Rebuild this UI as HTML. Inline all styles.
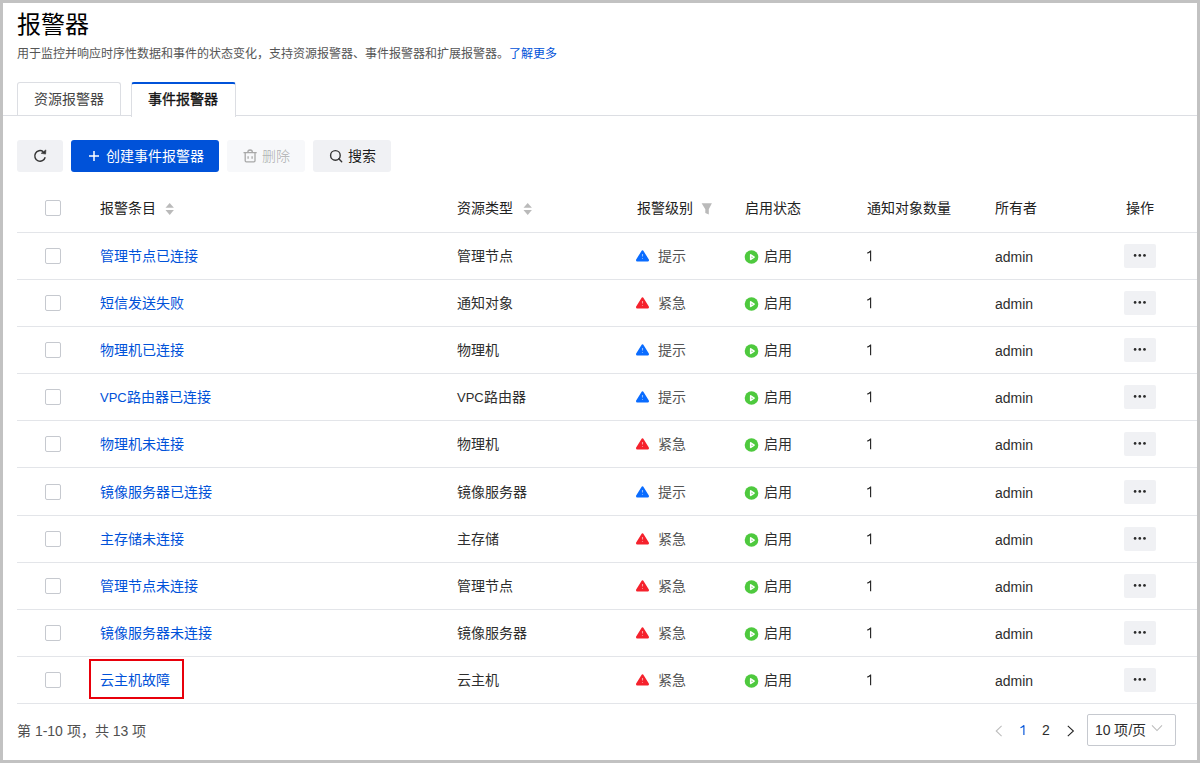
<!DOCTYPE html>
<html lang="zh-CN"><head><meta charset="utf-8">
<style>
*{box-sizing:border-box;margin:0;padding:0}
html,body{width:1200px;height:763px;overflow:hidden;background:#c2c2c2}
body{font-family:"Liberation Sans",sans-serif;color:rgba(0,0,0,.9);position:relative}
.page{position:absolute;left:3px;top:3px;width:1194px;height:757px;background:#fff;overflow:hidden}
.abs{position:absolute;white-space:nowrap}
.title{left:14px;top:6px;font-size:24px;line-height:32px;color:#000}
.desc{left:14px;top:41px;font-size:12px;line-height:20px;color:#555}
.desc a{color:#0052d9;text-decoration:none}
.tabline{left:0;top:112px;width:1194px;height:1px;background:#dcdee3}
.tab{top:79px;height:33px;border:1px solid #dcdee3;border-bottom:none;border-radius:3px 3px 0 0;font-size:14px;line-height:32px;text-align:center;background:#fff;color:#444}
.tab.t1{left:14px;width:104px;line-height:33px}
.tab.t2{left:128px;width:105px;border-top:2px solid #0052d9;line-height:31px;color:rgba(0,0,0,.9);font-weight:400;-webkit-text-stroke:0.4px rgba(0,0,0,.9);height:35px;text-indent:-2px}
.btn{top:137px;height:32px;border-radius:3px;font-size:14px;line-height:32px;background:#e7e7e7}
.b1{left:14px;width:46px;background:#f0f1f4}
.b2{left:68px;width:148px;background:#0052d9;color:#fff}
.b3{left:224px;width:78px;background:#f7f8fa;color:rgba(0,0,0,.26)}
.b4{left:310px;width:78px;background:#f0f1f4}
.btn svg{position:absolute}
.btn span{position:absolute}
.hline{left:14px;width:1180px;height:1px;background:#e3e5e9}
.cb{width:16px;height:16px;border:1px solid #c6c9cf;border-radius:2px;background:#fff}
.th{font-size:14px;line-height:22px;color:#222}
.td{font-size:14px;line-height:22px;color:#2e2e2e}
.lk{color:#0052d9}
.lv{color:#555}
.sm{font-size:13px}
.more{width:32px;height:24px;border-radius:2px;background:#f0f1f4}
.more i{position:absolute;top:10px;width:2.6px;height:2.6px;border-radius:50%;background:#333}
</style></head><body>
<div class="page">
<div class="abs title">报警器</div>
<div class="abs desc">用于监控并响应时序性数据和事件的状态变化，支持资源报警器、事件报警器和扩展报警器。<a>了解更多</a></div>
<div class="abs tabline"></div>
<div class="abs tab t1">资源报警器</div>
<div class="abs tab t2">事件报警器</div>

<div class="abs btn b1"><svg style="left:13px;top:5px" width="20" height="22" viewBox="0 0 20 22"><path d="M15.2 12.3A5.3 5.3 0 1 1 13.2 6.6" fill="none" stroke="#333" stroke-width="1.45"/><path d="M11.2 8.3L15.9 4.9L15.6 9.1Z" fill="#333" stroke="#333" stroke-width="0.6" stroke-linejoin="round"/></svg></div>
<div class="abs btn b2"><svg style="left:18px;top:11px" width="10" height="10" viewBox="0 0 10 10"><path d="M5 0v10M0 5h10" stroke="#fff" stroke-width="1.5"/></svg><span style="left:35px;top:0">创建事件报警器</span></div>
<div class="abs btn b3"><svg style="left:11px;top:5px" width="24" height="22" viewBox="0 0 24 22"><path d="M5.5 7.6H18.7M9.8 7.6A2.3 2.6 0 0 1 14.4 7.6M7.2 7.6V15.8Q7.2 16.9 8.3 16.9H15.9Q17 16.9 17 15.8V7.6M10.1 11.2V13.8M14.1 11.2V13.8" fill="none" stroke="#a8a8a8" stroke-width="1.3"/></svg><span style="left:35px;top:0">删除</span></div>
<div class="abs btn b4"><svg style="left:11px;top:5px" width="24" height="22" viewBox="0 0 24 22"><circle cx="11.4" cy="10.4" r="4.8" fill="none" stroke="#333" stroke-width="1.4"/><path d="M14.8 13.8L17.7 16.7" stroke="#333" stroke-width="1.4" stroke-linecap="round"/></svg><span style="left:35px;top:0">搜索</span></div>

<div class="abs cb" style="left:42px;top:197px;width:16px;height:16px;"></div>
<div class="abs th" style="left:97px;top:194px;">报警条目</div>
<svg class="abs" style="left:162px;top:199px" width="10" height="14" viewBox="0 0 10 14"><path d="M4.7 1L8.9 5.8H0.5z" fill="#bababa"/><path d="M4.7 13L8.9 7.9H0.5z" fill="#bababa"/></svg>
<div class="abs th" style="left:454px;top:194px;">资源类型</div>
<svg class="abs" style="left:520px;top:199px" width="10" height="14" viewBox="0 0 10 14"><path d="M4.7 1L8.9 5.8H0.5z" fill="#bababa"/><path d="M4.7 13L8.9 7.9H0.5z" fill="#bababa"/></svg>
<div class="abs th" style="left:634px;top:194px;">报警级别</div>
<svg class="abs" style="left:697px;top:199px" width="14" height="14" viewBox="0 0 14 14"><path d="M1.6 1.2H11.9L8.8 7.3V12.5L5.3 11V7.3Z" fill="#bababa"/></svg>
<div class="abs th" style="left:742px;top:194px;">启用状态</div>
<div class="abs th" style="left:864px;top:194px;">通知对象数量</div>
<div class="abs th" style="left:992px;top:194px;">所有者</div>
<div class="abs th" style="left:1123px;top:194px;">操作</div>
<div class="abs hline" style="left:14px;top:229px;width:1180px;height:1px;"></div>
<div class="abs cb" style="left:42px;top:245px;width:16px;height:16px;"></div>
<div class="abs td lk" style="left:97px;top:242px;">管理节点已连接</div>
<div class="abs td" style="left:454px;top:242px;">管理节点</div>
<svg class="abs" style="left:629px;top:243px" width="20" height="20" viewBox="0 0 20 20"><path d="M10.5 5.5L15.8 14.2H5.2z" fill="#0a6cff" stroke="#0a6cff" stroke-width="2.4" stroke-linejoin="round"/><path d="M10.5 7.9V10.4M10.5 12V12.8" stroke="#fff" stroke-opacity="0.55" stroke-width="1.1"/></svg>
<div class="abs td lv" style="left:655px;top:242px;">提示</div>
<svg class="abs" style="left:740px;top:245px" width="18" height="18" viewBox="0 0 18 18"><circle cx="8.5" cy="9" r="6.8" fill="#4ec93e"/><path d="M7.7 6.8L11.1 9.1L7.7 11.4z" fill="none" stroke="#fff" stroke-width="1.6" stroke-linejoin="round"/></svg>
<div class="abs td" style="left:761px;top:242px;">启用</div>
<svg class="abs" style="left:863px;top:247px" width="8" height="12" viewBox="0 0 8 12"><path d="M4.6 0.6V11.2M4.6 0.8Q3.5 2.3 1.3 3.1" fill="none" stroke="#262626" stroke-width="1.15"/></svg>
<div class="abs td" style="left:992px;top:243px;">admin</div>
<div class="abs more" style="left:1121px;top:241px"><svg width="32" height="24" viewBox="0 0 32 24" style="position:absolute;left:0;top:0"><circle cx="11.1" cy="11.4" r="1.35" fill="#2a2a2a"/><circle cx="15.8" cy="11.4" r="1.35" fill="#2a2a2a"/><circle cx="20.5" cy="11.4" r="1.35" fill="#2a2a2a"/></svg></div>
<div class="abs hline" style="left:14px;top:276px;width:1180px;height:1px;"></div>
<div class="abs cb" style="left:42px;top:292px;width:16px;height:16px;"></div>
<div class="abs td lk" style="left:97px;top:289px;">短信发送失败</div>
<div class="abs td" style="left:454px;top:289px;">通知对象</div>
<svg class="abs" style="left:629px;top:290px" width="20" height="20" viewBox="0 0 20 20"><path d="M10.5 5.5L15.8 14.2H5.2z" fill="#f5222d" stroke="#f5222d" stroke-width="2.4" stroke-linejoin="round"/><path d="M10.5 7.9V10.4M10.5 12V12.8" stroke="#fff" stroke-opacity="0.55" stroke-width="1.1"/></svg>
<div class="abs td lv" style="left:655px;top:289px;">紧急</div>
<svg class="abs" style="left:740px;top:292px" width="18" height="18" viewBox="0 0 18 18"><circle cx="8.5" cy="9" r="6.8" fill="#4ec93e"/><path d="M7.7 6.8L11.1 9.1L7.7 11.4z" fill="none" stroke="#fff" stroke-width="1.6" stroke-linejoin="round"/></svg>
<div class="abs td" style="left:761px;top:289px;">启用</div>
<svg class="abs" style="left:863px;top:294px" width="8" height="12" viewBox="0 0 8 12"><path d="M4.6 0.6V11.2M4.6 0.8Q3.5 2.3 1.3 3.1" fill="none" stroke="#262626" stroke-width="1.15"/></svg>
<div class="abs td" style="left:992px;top:290px;">admin</div>
<div class="abs more" style="left:1121px;top:288px"><svg width="32" height="24" viewBox="0 0 32 24" style="position:absolute;left:0;top:0"><circle cx="11.1" cy="11.4" r="1.35" fill="#2a2a2a"/><circle cx="15.8" cy="11.4" r="1.35" fill="#2a2a2a"/><circle cx="20.5" cy="11.4" r="1.35" fill="#2a2a2a"/></svg></div>
<div class="abs hline" style="left:14px;top:323px;width:1180px;height:1px;"></div>
<div class="abs cb" style="left:42px;top:339px;width:16px;height:16px;"></div>
<div class="abs td lk" style="left:97px;top:336px;">物理机已连接</div>
<div class="abs td" style="left:454px;top:336px;">物理机</div>
<svg class="abs" style="left:629px;top:337px" width="20" height="20" viewBox="0 0 20 20"><path d="M10.5 5.5L15.8 14.2H5.2z" fill="#0a6cff" stroke="#0a6cff" stroke-width="2.4" stroke-linejoin="round"/><path d="M10.5 7.9V10.4M10.5 12V12.8" stroke="#fff" stroke-opacity="0.55" stroke-width="1.1"/></svg>
<div class="abs td lv" style="left:655px;top:336px;">提示</div>
<svg class="abs" style="left:740px;top:339px" width="18" height="18" viewBox="0 0 18 18"><circle cx="8.5" cy="9" r="6.8" fill="#4ec93e"/><path d="M7.7 6.8L11.1 9.1L7.7 11.4z" fill="none" stroke="#fff" stroke-width="1.6" stroke-linejoin="round"/></svg>
<div class="abs td" style="left:761px;top:336px;">启用</div>
<svg class="abs" style="left:863px;top:341px" width="8" height="12" viewBox="0 0 8 12"><path d="M4.6 0.6V11.2M4.6 0.8Q3.5 2.3 1.3 3.1" fill="none" stroke="#262626" stroke-width="1.15"/></svg>
<div class="abs td" style="left:992px;top:337px;">admin</div>
<div class="abs more" style="left:1121px;top:335px"><svg width="32" height="24" viewBox="0 0 32 24" style="position:absolute;left:0;top:0"><circle cx="11.1" cy="11.4" r="1.35" fill="#2a2a2a"/><circle cx="15.8" cy="11.4" r="1.35" fill="#2a2a2a"/><circle cx="20.5" cy="11.4" r="1.35" fill="#2a2a2a"/></svg></div>
<div class="abs hline" style="left:14px;top:370px;width:1180px;height:1px;"></div>
<div class="abs cb" style="left:42px;top:386px;width:16px;height:16px;"></div>
<div class="abs td lk" style="left:97px;top:383px;"><span class="sm">VPC</span>路由器已连接</div>
<div class="abs td" style="left:454px;top:383px;"><span class="sm">VPC</span>路由器</div>
<svg class="abs" style="left:629px;top:384px" width="20" height="20" viewBox="0 0 20 20"><path d="M10.5 5.5L15.8 14.2H5.2z" fill="#0a6cff" stroke="#0a6cff" stroke-width="2.4" stroke-linejoin="round"/><path d="M10.5 7.9V10.4M10.5 12V12.8" stroke="#fff" stroke-opacity="0.55" stroke-width="1.1"/></svg>
<div class="abs td lv" style="left:655px;top:383px;">提示</div>
<svg class="abs" style="left:740px;top:386px" width="18" height="18" viewBox="0 0 18 18"><circle cx="8.5" cy="9" r="6.8" fill="#4ec93e"/><path d="M7.7 6.8L11.1 9.1L7.7 11.4z" fill="none" stroke="#fff" stroke-width="1.6" stroke-linejoin="round"/></svg>
<div class="abs td" style="left:761px;top:383px;">启用</div>
<svg class="abs" style="left:863px;top:388px" width="8" height="12" viewBox="0 0 8 12"><path d="M4.6 0.6V11.2M4.6 0.8Q3.5 2.3 1.3 3.1" fill="none" stroke="#262626" stroke-width="1.15"/></svg>
<div class="abs td" style="left:992px;top:384px;">admin</div>
<div class="abs more" style="left:1121px;top:382px"><svg width="32" height="24" viewBox="0 0 32 24" style="position:absolute;left:0;top:0"><circle cx="11.1" cy="11.4" r="1.35" fill="#2a2a2a"/><circle cx="15.8" cy="11.4" r="1.35" fill="#2a2a2a"/><circle cx="20.5" cy="11.4" r="1.35" fill="#2a2a2a"/></svg></div>
<div class="abs hline" style="left:14px;top:417px;width:1180px;height:1px;"></div>
<div class="abs cb" style="left:42px;top:433px;width:16px;height:16px;"></div>
<div class="abs td lk" style="left:97px;top:430px;">物理机未连接</div>
<div class="abs td" style="left:454px;top:430px;">物理机</div>
<svg class="abs" style="left:629px;top:431px" width="20" height="20" viewBox="0 0 20 20"><path d="M10.5 5.5L15.8 14.2H5.2z" fill="#f5222d" stroke="#f5222d" stroke-width="2.4" stroke-linejoin="round"/><path d="M10.5 7.9V10.4M10.5 12V12.8" stroke="#fff" stroke-opacity="0.55" stroke-width="1.1"/></svg>
<div class="abs td lv" style="left:655px;top:430px;">紧急</div>
<svg class="abs" style="left:740px;top:433px" width="18" height="18" viewBox="0 0 18 18"><circle cx="8.5" cy="9" r="6.8" fill="#4ec93e"/><path d="M7.7 6.8L11.1 9.1L7.7 11.4z" fill="none" stroke="#fff" stroke-width="1.6" stroke-linejoin="round"/></svg>
<div class="abs td" style="left:761px;top:430px;">启用</div>
<svg class="abs" style="left:863px;top:435px" width="8" height="12" viewBox="0 0 8 12"><path d="M4.6 0.6V11.2M4.6 0.8Q3.5 2.3 1.3 3.1" fill="none" stroke="#262626" stroke-width="1.15"/></svg>
<div class="abs td" style="left:992px;top:431px;">admin</div>
<div class="abs more" style="left:1121px;top:429px"><svg width="32" height="24" viewBox="0 0 32 24" style="position:absolute;left:0;top:0"><circle cx="11.1" cy="11.4" r="1.35" fill="#2a2a2a"/><circle cx="15.8" cy="11.4" r="1.35" fill="#2a2a2a"/><circle cx="20.5" cy="11.4" r="1.35" fill="#2a2a2a"/></svg></div>
<div class="abs hline" style="left:14px;top:464px;width:1180px;height:1px;"></div>
<div class="abs cb" style="left:42px;top:481px;width:16px;height:16px;"></div>
<div class="abs td lk" style="left:97px;top:478px;">镜像服务器已连接</div>
<div class="abs td" style="left:454px;top:478px;">镜像服务器</div>
<svg class="abs" style="left:629px;top:479px" width="20" height="20" viewBox="0 0 20 20"><path d="M10.5 5.5L15.8 14.2H5.2z" fill="#0a6cff" stroke="#0a6cff" stroke-width="2.4" stroke-linejoin="round"/><path d="M10.5 7.9V10.4M10.5 12V12.8" stroke="#fff" stroke-opacity="0.55" stroke-width="1.1"/></svg>
<div class="abs td lv" style="left:655px;top:478px;">提示</div>
<svg class="abs" style="left:740px;top:481px" width="18" height="18" viewBox="0 0 18 18"><circle cx="8.5" cy="9" r="6.8" fill="#4ec93e"/><path d="M7.7 6.8L11.1 9.1L7.7 11.4z" fill="none" stroke="#fff" stroke-width="1.6" stroke-linejoin="round"/></svg>
<div class="abs td" style="left:761px;top:478px;">启用</div>
<svg class="abs" style="left:863px;top:483px" width="8" height="12" viewBox="0 0 8 12"><path d="M4.6 0.6V11.2M4.6 0.8Q3.5 2.3 1.3 3.1" fill="none" stroke="#262626" stroke-width="1.15"/></svg>
<div class="abs td" style="left:992px;top:479px;">admin</div>
<div class="abs more" style="left:1121px;top:477px"><svg width="32" height="24" viewBox="0 0 32 24" style="position:absolute;left:0;top:0"><circle cx="11.1" cy="11.4" r="1.35" fill="#2a2a2a"/><circle cx="15.8" cy="11.4" r="1.35" fill="#2a2a2a"/><circle cx="20.5" cy="11.4" r="1.35" fill="#2a2a2a"/></svg></div>
<div class="abs hline" style="left:14px;top:512px;width:1180px;height:1px;"></div>
<div class="abs cb" style="left:42px;top:528px;width:16px;height:16px;"></div>
<div class="abs td lk" style="left:97px;top:525px;">主存储未连接</div>
<div class="abs td" style="left:454px;top:525px;">主存储</div>
<svg class="abs" style="left:629px;top:526px" width="20" height="20" viewBox="0 0 20 20"><path d="M10.5 5.5L15.8 14.2H5.2z" fill="#f5222d" stroke="#f5222d" stroke-width="2.4" stroke-linejoin="round"/><path d="M10.5 7.9V10.4M10.5 12V12.8" stroke="#fff" stroke-opacity="0.55" stroke-width="1.1"/></svg>
<div class="abs td lv" style="left:655px;top:525px;">紧急</div>
<svg class="abs" style="left:740px;top:528px" width="18" height="18" viewBox="0 0 18 18"><circle cx="8.5" cy="9" r="6.8" fill="#4ec93e"/><path d="M7.7 6.8L11.1 9.1L7.7 11.4z" fill="none" stroke="#fff" stroke-width="1.6" stroke-linejoin="round"/></svg>
<div class="abs td" style="left:761px;top:525px;">启用</div>
<svg class="abs" style="left:863px;top:530px" width="8" height="12" viewBox="0 0 8 12"><path d="M4.6 0.6V11.2M4.6 0.8Q3.5 2.3 1.3 3.1" fill="none" stroke="#262626" stroke-width="1.15"/></svg>
<div class="abs td" style="left:992px;top:526px;">admin</div>
<div class="abs more" style="left:1121px;top:524px"><svg width="32" height="24" viewBox="0 0 32 24" style="position:absolute;left:0;top:0"><circle cx="11.1" cy="11.4" r="1.35" fill="#2a2a2a"/><circle cx="15.8" cy="11.4" r="1.35" fill="#2a2a2a"/><circle cx="20.5" cy="11.4" r="1.35" fill="#2a2a2a"/></svg></div>
<div class="abs hline" style="left:14px;top:559px;width:1180px;height:1px;"></div>
<div class="abs cb" style="left:42px;top:575px;width:16px;height:16px;"></div>
<div class="abs td lk" style="left:97px;top:572px;">管理节点未连接</div>
<div class="abs td" style="left:454px;top:572px;">管理节点</div>
<svg class="abs" style="left:629px;top:573px" width="20" height="20" viewBox="0 0 20 20"><path d="M10.5 5.5L15.8 14.2H5.2z" fill="#f5222d" stroke="#f5222d" stroke-width="2.4" stroke-linejoin="round"/><path d="M10.5 7.9V10.4M10.5 12V12.8" stroke="#fff" stroke-opacity="0.55" stroke-width="1.1"/></svg>
<div class="abs td lv" style="left:655px;top:572px;">紧急</div>
<svg class="abs" style="left:740px;top:575px" width="18" height="18" viewBox="0 0 18 18"><circle cx="8.5" cy="9" r="6.8" fill="#4ec93e"/><path d="M7.7 6.8L11.1 9.1L7.7 11.4z" fill="none" stroke="#fff" stroke-width="1.6" stroke-linejoin="round"/></svg>
<div class="abs td" style="left:761px;top:572px;">启用</div>
<svg class="abs" style="left:863px;top:577px" width="8" height="12" viewBox="0 0 8 12"><path d="M4.6 0.6V11.2M4.6 0.8Q3.5 2.3 1.3 3.1" fill="none" stroke="#262626" stroke-width="1.15"/></svg>
<div class="abs td" style="left:992px;top:573px;">admin</div>
<div class="abs more" style="left:1121px;top:571px"><svg width="32" height="24" viewBox="0 0 32 24" style="position:absolute;left:0;top:0"><circle cx="11.1" cy="11.4" r="1.35" fill="#2a2a2a"/><circle cx="15.8" cy="11.4" r="1.35" fill="#2a2a2a"/><circle cx="20.5" cy="11.4" r="1.35" fill="#2a2a2a"/></svg></div>
<div class="abs hline" style="left:14px;top:606px;width:1180px;height:1px;"></div>
<div class="abs cb" style="left:42px;top:622px;width:16px;height:16px;"></div>
<div class="abs td lk" style="left:97px;top:619px;">镜像服务器未连接</div>
<div class="abs td" style="left:454px;top:619px;">镜像服务器</div>
<svg class="abs" style="left:629px;top:620px" width="20" height="20" viewBox="0 0 20 20"><path d="M10.5 5.5L15.8 14.2H5.2z" fill="#f5222d" stroke="#f5222d" stroke-width="2.4" stroke-linejoin="round"/><path d="M10.5 7.9V10.4M10.5 12V12.8" stroke="#fff" stroke-opacity="0.55" stroke-width="1.1"/></svg>
<div class="abs td lv" style="left:655px;top:619px;">紧急</div>
<svg class="abs" style="left:740px;top:622px" width="18" height="18" viewBox="0 0 18 18"><circle cx="8.5" cy="9" r="6.8" fill="#4ec93e"/><path d="M7.7 6.8L11.1 9.1L7.7 11.4z" fill="none" stroke="#fff" stroke-width="1.6" stroke-linejoin="round"/></svg>
<div class="abs td" style="left:761px;top:619px;">启用</div>
<svg class="abs" style="left:863px;top:624px" width="8" height="12" viewBox="0 0 8 12"><path d="M4.6 0.6V11.2M4.6 0.8Q3.5 2.3 1.3 3.1" fill="none" stroke="#262626" stroke-width="1.15"/></svg>
<div class="abs td" style="left:992px;top:620px;">admin</div>
<div class="abs more" style="left:1121px;top:618px"><svg width="32" height="24" viewBox="0 0 32 24" style="position:absolute;left:0;top:0"><circle cx="11.1" cy="11.4" r="1.35" fill="#2a2a2a"/><circle cx="15.8" cy="11.4" r="1.35" fill="#2a2a2a"/><circle cx="20.5" cy="11.4" r="1.35" fill="#2a2a2a"/></svg></div>
<div class="abs hline" style="left:14px;top:653px;width:1180px;height:1px;"></div>
<div class="abs cb" style="left:42px;top:669px;width:16px;height:16px;"></div>
<div class="abs td lk" style="left:97px;top:666px;">云主机故障</div>
<div class="abs td" style="left:454px;top:666px;">云主机</div>
<svg class="abs" style="left:629px;top:667px" width="20" height="20" viewBox="0 0 20 20"><path d="M10.5 5.5L15.8 14.2H5.2z" fill="#f5222d" stroke="#f5222d" stroke-width="2.4" stroke-linejoin="round"/><path d="M10.5 7.9V10.4M10.5 12V12.8" stroke="#fff" stroke-opacity="0.55" stroke-width="1.1"/></svg>
<div class="abs td lv" style="left:655px;top:666px;">紧急</div>
<svg class="abs" style="left:740px;top:669px" width="18" height="18" viewBox="0 0 18 18"><circle cx="8.5" cy="9" r="6.8" fill="#4ec93e"/><path d="M7.7 6.8L11.1 9.1L7.7 11.4z" fill="none" stroke="#fff" stroke-width="1.6" stroke-linejoin="round"/></svg>
<div class="abs td" style="left:761px;top:666px;">启用</div>
<svg class="abs" style="left:863px;top:671px" width="8" height="12" viewBox="0 0 8 12"><path d="M4.6 0.6V11.2M4.6 0.8Q3.5 2.3 1.3 3.1" fill="none" stroke="#262626" stroke-width="1.15"/></svg>
<div class="abs td" style="left:992px;top:667px;">admin</div>
<div class="abs more" style="left:1121px;top:665px"><svg width="32" height="24" viewBox="0 0 32 24" style="position:absolute;left:0;top:0"><circle cx="11.1" cy="11.4" r="1.35" fill="#2a2a2a"/><circle cx="15.8" cy="11.4" r="1.35" fill="#2a2a2a"/><circle cx="20.5" cy="11.4" r="1.35" fill="#2a2a2a"/></svg></div>
<div class="abs hline" style="left:14px;top:700px;width:1180px;height:1px;"></div>
<div class="abs abs" style="left:86px;top:656px;width:95px;height:40px;border:2px solid #e8000b"></div>
<svg class="abs" style="left:991px;top:722px" width="10" height="12" viewBox="0 0 10 12"><path d="M7.6 0.8L2.2 6l5.4 5.2" fill="none" stroke="#bdbdbd" stroke-width="1.05"/></svg>
<svg class="abs" style="left:1016px;top:721px" width="8" height="12" viewBox="0 0 8 12"><path d="M4.9 1.2V11M4.9 1.4Q3.8 2.9 1.5 3.7" fill="none" stroke="#0052d9" stroke-width="1.15"/></svg>
<div class="abs td" style="left:1039px;top:716px;">2</div>
<svg class="abs" style="left:1063px;top:722px" width="10" height="12" viewBox="0 0 10 12"><path d="M1.8 0.8L7.4 6l-5.6 5.2" fill="none" stroke="#222" stroke-width="1.05"/></svg>
<div class="abs" style="left:1084px;top:711px;width:89px;height:32px;border:1px solid #c6c9cf;border-radius:2px"></div>
<div class="abs td" style="left:1092px;top:716px;">10 项/页</div>
<svg class="abs" style="left:1148px;top:721px" width="12" height="9" viewBox="0 0 12 9"><path d="M1 1.3l5 5.2 5-5.2" fill="none" stroke="#bbb" stroke-width="1.05"/></svg>
<div class="abs td" style="left:14px;top:717px;color:#505050">第 1-10 项，共 13 项</div>
</div>
</body></html>
